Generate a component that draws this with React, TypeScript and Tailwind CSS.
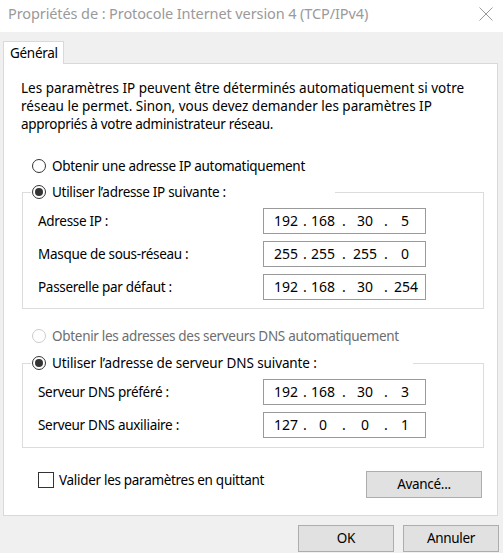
import React from "react";

const Radio = ({ checked, disabled }: { checked?: boolean; disabled?: boolean }) => (
  <div
    className={
      "w-[14px] h-[14px] rounded-full border flex items-center justify-center bg-white shrink-0 " +
      (disabled ? "border-[#cccccc]" : "border-[#333333]")
    }
  >
    {checked && <div className="w-[8px] h-[8px] rounded-full bg-[#333333]" />}
  </div>
);

const IpBox = ({ parts }: { parts: string[] }) => {
  const widths = ["w-[28px]", "w-[26px]", "w-[26px]", "w-[22px]"];
  const dotW = ["w-[10px]", "w-[16px]", "w-[16px]"];
  return (
    <div className="w-[163px] h-[26px] border border-[#9a9a9a] bg-white flex items-center pl-[8px] text-[14px] leading-none tracking-normal">
      {parts.map((p, i) => (
        <React.Fragment key={i}>
          <span className={widths[i] + " text-center"}>{p}</span>
          {i < 3 && <span className={dotW[i] + " text-center"}>.</span>}
        </React.Fragment>
      ))}
    </div>
  );
};

const Row = ({ label, parts, first }: { label: string; parts: string[]; first?: boolean }) => (
  <div className={"flex items-center pl-[15px] " + (first ? "mt-[6px]" : "mt-[7px]")}>
    <span className="w-[225px] text-[13.5px]">{label}</span>
    <IpBox parts={parts} />
  </div>
);

export default function App() {
  return (
    <div className="w-[503px] h-[553px] bg-[#f0f0f0] overflow-hidden font-['Noto_Sans',sans-serif] text-black tracking-[-0.3px]">
      {/* Title bar */}
      <div className="h-[32px] bg-white flex items-center justify-between pl-[8px] pr-[10px]">
        <span className="text-[14.5px] text-[#9a9a9a] -mt-[4px] tracking-[-0.1px]">
          Propriétés de : Protocole Internet version 4 (TCP/IPv4)
        </span>
        <svg width="14" height="14" viewBox="0 0 14 14" className="-mt-[4px]">
          <path d="M0.5 0.5 L13.5 13.5 M13.5 0.5 L0.5 13.5" stroke="#9a9a9a" strokeWidth="1" />
        </svg>
      </div>

      {/* Tab */}
      <div className="pt-[9px] pl-[3px]">
        <div className="relative z-10 -mb-[1px] w-[61px] h-[23px] bg-white border border-b-0 border-[#d9d9d9] flex items-center pl-[6px] text-[13.5px]">
          Général
        </div>
        {/* Panel */}
        <div className="w-[495px] h-[453px] bg-white border border-[#d9d9d9] pl-[17px] pt-[15px]">
          <div className="text-[13.5px] leading-[18px]">
            <div className="tracking-normal">Les paramètres IP peuvent être déterminés automatiquement si votre</div>
            <div className="tracking-normal">réseau le permet. Sinon, vous devez demander les paramètres IP</div>
            <div>appropriés à votre administrateur réseau.</div>
          </div>

          <div className="mt-[23px] h-[20px] flex items-center pl-[11px] gap-[6px] text-[13.5px]">
            <Radio />
            <span>Obtenir une adresse IP automatiquement</span>
          </div>

          {/* Group 1 */}
          <div className="mt-[16px] ml-[1px] w-[462px] h-[117px] border border-[#dcdcdc]">
            <div className="-mt-[11px] ml-[8px] w-[304px] h-[20px] bg-white flex items-center gap-[6px] pl-[1px] text-[13.5px]">
              <Radio checked />
              <span>Utiliser l’adresse IP suivante :</span>
            </div>
            <Row first label="Adresse IP :" parts={["192", "168", "30", "5"]} />
            <Row label="Masque de sous-réseau :" parts={["255", "255", "255", "0"]} />
            <Row label="Passerelle par défaut :" parts={["192", "168", "30", "254"]} />
          </div>

          <div className="mt-[17px] h-[20px] flex items-center pl-[11px] gap-[6px] text-[13.5px] text-[#6d6d6d]">
            <Radio disabled />
            <span>Obtenir les adresses des serveurs DNS automatiquement</span>
          </div>

          {/* Group 2 */}
          <div className="mt-[17px] ml-[1px] w-[462px] h-[85px] border border-[#dcdcdc]">
            <div className="-mt-[11px] ml-[8px] w-[382px] h-[20px] bg-white flex items-center gap-[6px] pl-[1px] text-[13.5px]">
              <Radio checked />
              <span className="tracking-[-0.1px]">Utiliser l’adresse de serveur DNS suivante :</span>
            </div>
            <Row first label="Serveur DNS préféré :" parts={["192", "168", "30", "3"]} />
            <Row label="Serveur DNS auxiliaire :" parts={["127", "0", "0", "1"]} />
          </div>

          <div className="mt-[23px] flex items-start justify-between w-[462px]">
            <div className="flex items-center h-[18px] gap-[5px] pl-[17px] text-[13.5px]">
              <div className="w-[16px] h-[16px] border border-[#333333] bg-white" />
              <span>Valider les paramètres en quittant</span>
            </div>
            <button className="w-[116px] h-[27px] bg-[#e1e1e1] border border-[#adadad] text-[13.5px] mr-[1px]">
              Avancé...
            </button>
          </div>
        </div>
      </div>

      {/* Bottom buttons */}
      <div className="mt-[9px] flex justify-end gap-[9px] pr-[4px]">
        <button className="w-[96px] h-[27px] bg-[#e1e1e1] border border-[#adadad] text-[13.5px]">OK</button>
        <button className="w-[96px] h-[27px] bg-[#e1e1e1] border border-[#adadad] text-[13.5px]">Annuler</button>
      </div>
    </div>
  );
}
